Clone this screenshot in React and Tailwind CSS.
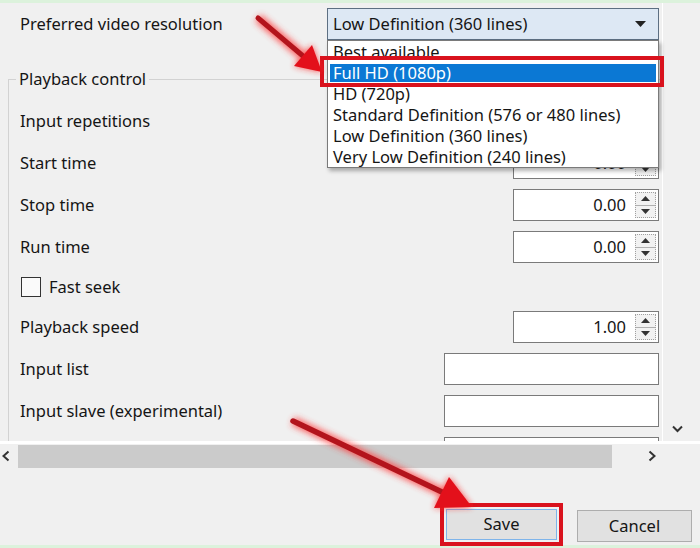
import React from "react";

const items = [
  "Best available",
  "Full HD (1080p)",
  "HD (720p)",
  "Standard Definition (576 or 480 lines)",
  "Low Definition (360 lines)",
  "Very Low Definition (240 lines)",
];

function Spin({ value }) {
  return (
    <div className="flex h-[32px] w-[146px] border border-[#7a7a7a] bg-white">
      <div className="flex-1 pr-[9px] text-right leading-[30px]">{value}</div>
      <div className="my-[2px] mr-[2px] flex w-[21px] flex-col border border-dotted border-[#a0a0a0] bg-[#f2f2f2]">
        <div className="flex flex-1 items-center justify-center border-b border-[#b0b0b0]">
          <svg width="9" height="5" viewBox="0 0 9 5">
            <path d="M0 5L4.5 0L9 5Z" fill="#333" />
          </svg>
        </div>
        <div className="flex flex-1 items-center justify-center">
          <svg width="9" height="5" viewBox="0 0 9 5">
            <path d="M0 0L4.5 5L9 0Z" fill="#333" />
          </svg>
        </div>
      </div>
    </div>
  );
}

function Field() {
  return <div className="h-[32px] w-[215px] border border-[#7a7a7a] bg-white" />;
}

function Row({ label, children }) {
  return (
    <div className="flex h-[42px] items-center justify-between">
      <span>{label}</span>
      {children}
    </div>
  );
}

export default function App() {
  return (
    <div className="relative h-[548px] w-[700px] overflow-hidden bg-[#f0f0f0] font-['Noto_Sans',sans-serif] text-[16.5px] text-[#151515]">
      <div className="h-[3px] bg-[#dcf2dc]" />

      <div className="flex h-[438px]">
        <div className="w-[663px] overflow-hidden border-r border-white">
          <div className="mt-[5px] flex h-[32px] items-center pl-[20px]">
            <span>Preferred video resolution</span>
            <div className="ml-auto mr-[3px] flex h-[32px] w-[332px] items-center border border-[#5d6f82] bg-[#dde8f4] pl-[5px] pr-[12px]">
              <span className="flex-1">Low Definition (360 lines)</span>
              <svg width="11" height="6" viewBox="0 0 11 6">
                <path d="M0 0H11L5.5 6Z" fill="#222" />
              </svg>
            </div>
          </div>

          <fieldset className="ml-[8px] mt-[28px] border-l border-t border-[#d2d2d2] pr-[3px]">
            <legend className="ml-[7px] px-[3px] leading-[22px]">Playback control</legend>
            <div className="pl-[11px] pt-[10px]">
              <Row label="Input repetitions">
                <Spin value="" />
              </Row>
              <Row label="Start time">
                <Spin value="0.00" />
              </Row>
              <Row label="Stop time">
                <Spin value="0.00" />
              </Row>
              <Row label="Run time">
                <Spin value="0.00" />
              </Row>
              <div className="flex h-[38px] items-center gap-[8px] pl-[1px]">
                <div className="h-[20px] w-[20px] border border-[#333] bg-[#fafafa]" />
                <span>Fast seek</span>
              </div>
              <Row label="Playback speed">
                <Spin value="1.00" />
              </Row>
              <Row label="Input list">
                <Field />
              </Row>
              <Row label="Input slave (experimental)">
                <Field />
              </Row>
              <Row label="">
                <Field />
              </Row>
            </div>
          </fieldset>
        </div>
        <div className="flex flex-1 flex-col items-center justify-end pb-[8px] pr-[8px]">
          <svg width="11" height="8" viewBox="0 0 11 8">
            <path d="M1 1.5L5.5 6L10 1.5" fill="none" stroke="#333" strokeWidth="2" />
          </svg>
        </div>
      </div>

      <div className="h-[3px] bg-white" />

      <div className="flex h-[24px] items-center">
        <div className="flex w-[18px] items-center pl-[1px]">
          <svg width="9" height="12" viewBox="0 0 9 12">
            <path d="M7.5 1.5L2.5 6L7.5 10.5" fill="none" stroke="#333" strokeWidth="2" />
          </svg>
        </div>
        <div className="h-[23px] w-[594px] bg-[#cbcbcb]" />
        <div className="ml-[36px] flex w-[15px] items-center">
          <svg width="9" height="12" viewBox="0 0 9 12">
            <path d="M1.5 1.5L6.5 6L1.5 10.5" fill="none" stroke="#333" strokeWidth="2" />
          </svg>
        </div>
      </div>

      <div className="flex h-[77px] items-start justify-end gap-[14px] pr-[8px] pt-[35px]">
        <div className="border-[4px] border-[#d9121d] p-[2px]">
          <button className="h-[31px] w-[111px] border border-[#7eb4ea] bg-[#e1e1e1]">Save</button>
        </div>
        <button className="mt-[7px] h-[32px] w-[115px] border border-[#adadad] bg-[#e1e1e1]">Cancel</button>
      </div>

      <div className="h-[3px] bg-[#dcf2dc]" />

      {/* open combo popup */}
      <div className="absolute left-[327px] top-[40px] h-[128px] w-[332px] border border-[#7a7a7a] bg-white shadow-[2px_3px_4px_rgba(0,0,0,0.3)]">
        {items.map((it) => (
          <div key={it} className="flex h-[21px] items-center px-[2px]">
            <div
              className={`h-[18px] w-full whitespace-nowrap pl-[3px] leading-[18px] ${
                it === "Full HD (1080p)" ? "bg-[#0b78d4] text-white" : ""
              }`}
            >
              {it}
            </div>
          </div>
        ))}
      </div>
      <div className="absolute left-[320px] top-[56px] h-[31px] w-[344px] border-[4px] border-[#d9121d]" />

      {/* annotation arrows */}
      <svg className="pointer-events-none absolute inset-0" width="700" height="548">
        <defs>
          <filter id="glow" x="-50%" y="-50%" width="200%" height="200%">
            <feGaussianBlur stdDeviation="3" />
          </filter>
        </defs>
        <g filter="url(#glow)" opacity="0.8">
          <line x1="258" y1="18" x2="303" y2="56" stroke="#ff3a3a" strokeWidth="9" />
          <polygon points="322,72 294,66 312,45" fill="#ff2020" />
          <line x1="293" y1="421" x2="444" y2="493" stroke="#ff3a3a" strokeWidth="9" />
          <polygon points="472,507 434,508 449,477" fill="#ff2020" />
        </g>
        <line x1="258" y1="18" x2="303" y2="56" stroke="#b3141c" strokeWidth="5" strokeLinecap="round" />
        <polygon points="322,72 294,66 312,45" fill="#e3101b" />
        <line x1="293" y1="421" x2="444" y2="493" stroke="#b3141c" strokeWidth="5.5" strokeLinecap="round" />
        <polygon points="472,507 434,508 449,477" fill="#e3101b" />
      </svg>
    </div>
  );
}
